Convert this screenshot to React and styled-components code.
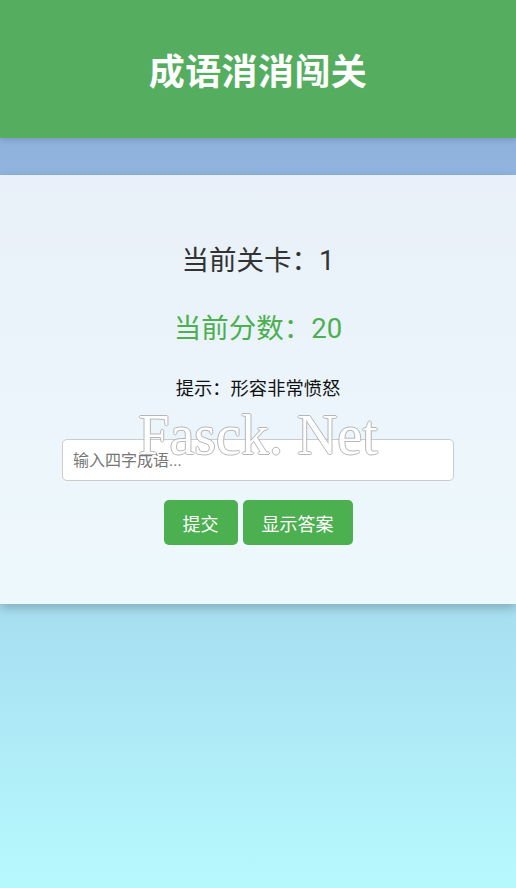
import React, { useState } from "react";
import styled, { createGlobalStyle } from "styled-components";

const GlobalStyle = createGlobalStyle`
  html, body {
    margin: 0;
    padding: 0;
  }
  body {
    min-height: 888px;
    font-family: Roboto, "Noto Sans CJK SC", sans-serif;
    background: linear-gradient(to bottom, #87a4d7 0%, #b6f9fd 100%);
    background-attachment: fixed;
  }
`;

const Page = styled.div`
  position: relative;
  min-height: 888px;
`;

const Header = styled.header`
  height: 138px;
  display: flex;
  align-items: center;
  justify-content: center;
  background: #55ae5f;
  box-shadow: 0 2px 6px rgba(0, 0, 0, 0.15);
`;

const Title = styled.h1`
  margin: 0;
  color: #fff;
  font-size: 36px;
  font-weight: 700;
  font-family: "Noto Sans CJK SC", sans-serif;
  letter-spacing: 0.4px;
`;

const Card = styled.main`
  margin-top: 37px;
  padding: 20px 20px 59px;
  display: flex;
  flex-direction: column;
  align-items: center;
  background: rgba(255, 255, 255, 0.8);
  box-shadow: 0 4px 10px rgba(0, 0, 0, 0.22);
`;

const Stat = styled.div`
  margin-top: ${(p) => p.$top}px;
  font-size: 27.5px;
  line-height: 40px;
  color: ${(p) => (p.$accent ? "#4caf50" : "#333")};
`;

const Hint = styled.div`
  margin-top: 27px;
  font-size: 18.3px;
  line-height: 26px;
  color: #111;
`;

const Input = styled.input`
  box-sizing: border-box;
  margin-top: 37px;
  width: 392px;
  height: 42px;
  padding: 0 10px;
  font-size: 16px;
  font-family: Roboto, "Noto Sans CJK SC", sans-serif;
  border: 1px solid #ccc;
  border-radius: 5px;
  background: #fff;
  outline: none;
  &::placeholder {
    color: #777;
  }
`;

const Actions = styled.div`
  margin-top: 19px;
  display: flex;
  gap: 5px;
`;

const Button = styled.button`
  height: 45px;
  padding: 0 19px;
  border: none;
  border-radius: 5px;
  background: #4caf50;
  color: #fff;
  font-size: 18px;
  font-family: Roboto, "Noto Sans CJK SC", sans-serif;
  cursor: pointer;
`;

const Watermark = styled.div`
  position: absolute;
  top: 403px;
  left: 0;
  right: 0;
  text-align: center;
  font-family: "Liberation Serif", serif;
  font-size: 56px;
  line-height: 64px;
  color: #fff;
  text-shadow: -1px 0 #b0b0b0, 1px 0 #b0b0b0, 0 -1px #b0b0b0, 0 1px #b0b0b0;
  pointer-events: none;
  opacity: 0.9;
`;

export default function App() {
  const [guess, setGuess] = useState("");

  return (
    <>
      <GlobalStyle />
      <Page>
        <Header>
          <Title>成语消消闯关</Title>
        </Header>
        <Card>
          <Stat $top={46}>当前关卡：1</Stat>
          <Stat $top={28} $accent>
            当前分数：20
          </Stat>
          <Hint>提示：形容非常愤怒</Hint>
          <Input
            value={guess}
            onChange={(e) => setGuess(e.target.value)}
            placeholder="输入四字成语..."
          />
          <Actions>
            <Button>提交</Button>
            <Button>显示答案</Button>
          </Actions>
        </Card>
        <Watermark>Fasck. Net</Watermark>
      </Page>
    </>
  );
}
